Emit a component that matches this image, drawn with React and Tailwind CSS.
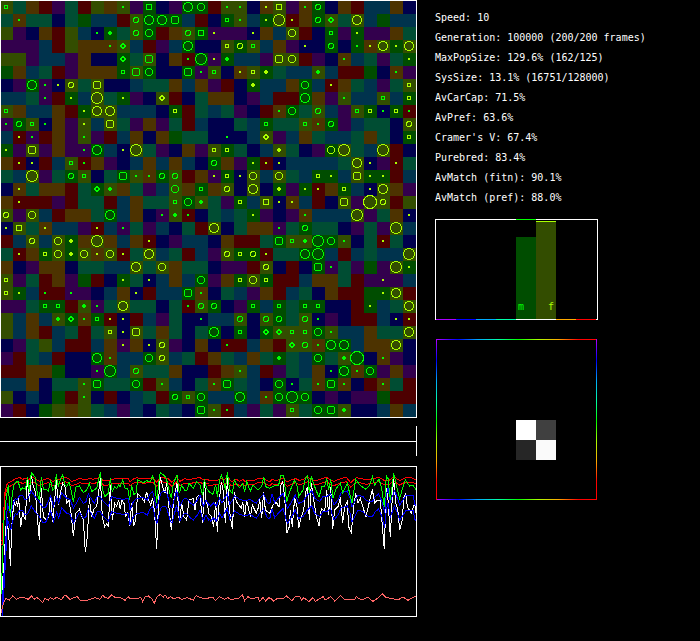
import React from 'react';

const CELL = 13;

// one letter per habitat type
const HABITAT = {
  P: '#33004d',
  N: '#00004d',
  B: '#00334d',
  T: '#004d33',
  G: '#004d00',
  L: '#334d00',
  O: '#4d3300',
  R: '#4d0000',
};

const world = [
  'LTORPTRLOLPGNPGGRLLNOLPOGNORBBON',
  'TOTTNTGBBRLGGGBRNGLBGLROGLTLBGBB',
  'LPNORLBNGTLGROLGPPPNOBLRNGPGPPOT',
  'PPPBRLOOOLBRPBGNNLGLBOPNNGNGOLGL',
  'LLPBBPONNGTLNORGPGBBPLLRPNOBTPTG',
  'GOBTRPOOOGLGNNGPLNOLGTBBLBRRGNOP',
  'NPGPNLTLNNBTTOBOPRNGBBOGBROTBPTL',
  'BBTPRGBLTGPNLRNTOONPBRRGOPLBBLBG',
  'LOBBORGLLBBBNGRTBTPNROGTLBPLGNGR',
  'PGLNOPLBLTPOPTRBNNTBGTTLOGPBTTNL',
  'BRPROPLPRBONOGTTNNNBLPBOTBBTOTNG',
  'GPLPOPPGBNLTPNOPLGTNBLTNPGLTBLRN',
  'ORNRBLROPNBOBOBNGOPGRNBBBBTLNPRT',
  'TBLPTGLNTGLOGLROPGNLBLTBGGBLGGRB',
  'NOTOORTGLOTPBLOGOLNLNGPGROGBNLOP',
  'ORRRPRTTRBOTTLGLTPGBLNOBRNLPLLRL',
  'LPLBROOTGBONPLRNTBTGPNPOBBBLPTON',
  'NLTOBBPRBPTPBNTRLNTOOPTGTTNPTPLB',
  'RBLBLGOLOBORNPBBNORRTGLLGGLNTRTN',
  'TROGLGLOLRTLBTRBPLGGRTTGGBRBTBBL',
  'ONPOONTTBBLTLOTTNPPRLNRNGPTPGPLG',
  'LPTROPGRNGTNBOBGPOGLGRRBOOTRPPPB',
  'LGBRRPPNBONRBBGONTBPORBTNORRGGLR',
  'PPTGGRLPTLTTNTRLGNPGBGTGGNNRGBTL',
  'LBOBLGOGRNRBPTNNBBLNLGTLNPNRRBNR',
  'LBORBTRTLNLTOTNTGNGNGLLLGLBBOTTL',
  'NPTLBRRBOPONLPNONRRBORLLOGGBOOLN',
  'PRTBRNNGOBBGLBTROTBOTGTBGTLGNOPN',
  'RROOGNNPGBLTTONNROLBRPTBONGOGPOP',
  'BBONTTLGTTGRLBNTOGTBNGNTOGONROTR',
  'LNBNGRLNRNBTRGLGBBGBOGGGNPNPPGRR',
  'PRNGLOLTBPBNTBNGLRBPTPLTGGLNNBOB',
];

// column + kind for each row; lowercase = male (green), uppercase = female (lime)
const marks = [
  '0c 9a 11q 14g 15f 17a 18a 20A 21Q 23a 24e',
  '1a 10e 11g 12g 13s 17c 18a 20A 21H 22A 24e 25d 27G',
  '7a 8b 10e 11f 14e 15q 16A 19A 22F 25c 27A',
  '8a 9d 14g 17C 18E 19c 23A 25e 27a 28A 29G 30A 31G',
  '9d 11s 14a 15h 16A 17b 21S 22F 26a 31A',
  '9c 10s 11f 14s 15a 16c 18A 19C 20B 24b 30a',
  '2g 3a 4A 5E 7S 19B 23f 25A 31C',
  '3a 5A 7H 9A 12D 23g 26a 29c 31C',
  '0c 6A 7G 8G 13C 21a 22f 24e 27c 28C 29a 30C 31a',
  '0a 1e 2c 3a 6A 8S 20c 23c 24a 25e 31E',
  '1A 2a 6a 17a 20D 31C',
  '0A 2S 6a 7g 9A 10H 16C 17C 21B 25F 26H 29H',
  '1A 2A 5c 6a 16e 19A 20A 21A 27G 28A 30A',
  '2H 5e 6c 9s 10a 11a 12e 13e 16A 17C 18A 19F 21F 24C 25A 27S 28A 29A',
  '1A 7d 8b 13f 15c 17E 19G 21B 23A 24A 26C 28A 29G',
  '1A 13c 14f 15b 18C 20Q 21A 22A 26S 28I 29E',
  '0E 2F 8g 12a 13b 14a 19A 23a 27H 31A',
  '0A 1Q 3A 7A 9a 16G 21a 23e 30H',
  '2E 4F 5B 7H 11A 21s 22c 23b 24h 25f 26a 29A',
  '1A 3C 4F 5B 6F 7A 8F 9A 11G 17E 18C 19E 20A 23g 24h 31H',
  '10G 12F 20E 24s 25a 30H 31A',
  '0C 9A 11A 15f 18C 19F 20C 29A',
  '0C 1A 3a 5a 10A 14s 15a 29A 30G',
  '3c 4c 6b 7a 9G 14a 15e 16e 19c 21c 23c 24c 28A 31G',
  '4b 5d 6a 7c 8A 9A 15a 18e 20e 21e 23e 24a 30A 31A',
  '8C 9A 10S 16g 18c 20d 21d 22c 23c 24f 25a 31G',
  '9A 11A 12E 17a 22d 23e 24a 25g 26g 30G',
  '7g 8a 11f 12E 21b 24f 26b 27i 29a',
  '7a 8h 10e 18a 25a 26g 27a 28f',
  '6a 7s 10f 12a 16a 17s 21f 22a 24a 25s 26a 29a',
  '6a 13e 14c 15f 18g 20a 21f 22h 23f',
  '15s 16a 17a 22c 24f 25s 26b',
];

const RADIUS = { e: 3, f: 4, g: 5, h: 6, i: 7 };

function Mark({ kind, col, row }) {
  const size = kind.toLowerCase();
  const color = kind === size ? '#00ff00' : '#aaff00';
  const x = col * CELL + 6;
  const y = row * CELL + 7;

  if (size === 'a') return <rect x={x - 1} y={y - 1} width="2" height="2" fill={color} />;
  if (size === 'b') return <path d={`M${x - 2} ${y - 1}h1v-1h2v1h1v2h-1v1h-2v-1h-1z`} fill={color} />;
  if (size === 'c') return <path d={`M${x - 2} ${y - 2}h4v4h-4zm1 1v2h2v-2z`} fill={color} fillRule="evenodd" />;
  if (size === 'q') return <path d={`M${x - 3} ${y - 3}h6v6h-6zm1 1v4h4v-4z`} fill={color} fillRule="evenodd" />;
  if (size === 'd') return <path d={`M${x - 3} ${y - 1}h1v-1h1v-1h2v1h1v1h1v2h-1v1h-1v1h-2v-1h-1v-1h-1zm2 0v2h2v-2z`} fill={color} fillRule="evenodd" />;
  if (size === 's') return <path d={`M${x - 3} ${y - 4}h6v1h1v6h-1v1h-6v-1h-1v-6h1zm0 1v6h6v-6z`} fill={color} fillRule="evenodd" />;
  return <circle cx={x} cy={y} r={RADIUS[size] - 0.5} fill="none" stroke={color} />;
}

function World() {
  return (
    <svg className="block w-[417px] h-[418px]" viewBox="0 0 417 418" shapeRendering="crispEdges">
      {world.map((line, row) =>
        line.split('').map((t, col) => (
          <rect key={`${row}-${col}`} x={col * CELL} y={row * CELL + 1} width={CELL} height={CELL} fill={HABITAT[t]} />
        ))
      )}
      {marks.map((line, row) =>
        line.split(' ').map((m) => (
          <Mark key={`${row}-${m}`} kind={m.slice(-1)} col={parseInt(m, 10)} row={row} />
        ))
      )}
      <rect x="0.5" y="0.5" width="416" height="417" fill="none" stroke="#fff" />
    </svg>
  );
}

// history traces, three units per pixel, split in two halves
const history = [
  {
    x: 0,
    red: '3,360 8,360 9,310 15,215 22,190 37,182 48,175 60,173 68,178 75,175 86,178 100,173 110,180 118,184 130,180 145,175 152,180 160,185 170,178 180,178 195,172 205,176 215,184 228,180 240,175 250,179 260,178 270,175 280,178 300,172 310,182 325,182 345,176 385,176 390,185 398,178 410,173 430,177 445,175 460,176 470,186 482,172 505,176 515,186 530,173 540,184 555,176 568,180 580,175 600,173 610,180 627,178',
    blue: '6,560 12,460 18,350 22,250 32,285 40,250 45,236 52,238 60,225 70,228 75,240 84,235 94,212 105,230 118,245 128,262 137,262 145,245 152,228 160,260 170,232 176,250 185,218 200,235 210,238 220,264 230,248 238,232 250,250 258,245 265,222 275,238 283,250 292,230 300,228 310,245 325,258 335,230 350,235 370,238 385,235 390,270 400,245 410,235 430,233 442,240 450,222 458,215 464,240 470,268 482,220 490,213 500,217 510,255 516,265 530,210 540,258 550,238 560,235 572,250 580,255 592,240 600,225 610,258 618,240 627,258',
    green: '3,525 6,460 12,300 18,240 25,195 31,290 37,220 43,190 54,183 62,210 68,204 76,208 83,170 88,215 94,157 106,172 112,220 118,240 124,172 130,208 137,208 145,213 152,180 158,210 164,205 169,163 175,200 182,175 188,165 195,195 200,200 207,187 213,210 220,245 228,200 238,198 250,218 260,210 268,190 275,215 290,205 301,157 307,205 314,230 325,220 331,175 337,215 344,200 350,206 356,195 360,200 368,180 375,205 383,205 389,240 395,195 401,223 408,220 413,180 430,188 440,182 450,186 458,168 464,185 470,248 476,190 481,157 490,165 497,172 500,180 507,210 514,235 520,190 531,165 538,220 545,195 555,213 562,210 567,190 580,205 590,185 600,195 608,225 613,178 620,205 627,213',
    white: '3,460 6,510 12,430 20,280 28,370 31,437 36,310 42,240 46,258 50,244 53,262 56,235 62,322 68,275 72,290 76,300 82,180 88,245 94,165 100,200 106,215 112,290 118,360 124,205 130,290 140,300 146,290 152,225 158,305 164,240 169,180 175,255 182,215 188,190 195,200 201,250 207,240 213,280 220,347 228,280 238,268 250,300 256,395 262,350 268,235 275,290 283,265 290,260 301,175 307,290 314,320 320,312 325,318 331,195 337,300 344,250 350,258 356,240 361,268 365,240 372,250 377,292 383,275 389,318 395,250 401,318 407,300 413,222 425,233 433,245 440,215 446,240 452,255 458,235 464,280 470,388 476,235 481,170 488,200 495,220 500,190 507,265 514,330 520,250 526,215 531,190 538,310 545,250 552,290 560,300 567,240 580,236 585,270 591,230 600,225 608,310 613,180 618,240 627,275',
    salmon: '3,578 12,545 18,536 28,540 38,528 50,538 60,532 75,534 85,538 95,527 102,538 110,532 120,540 128,548 135,535 145,541 150,533 160,538 170,532 185,540 192,527 200,528 210,538 220,534 232,530 240,541 265,540 285,533 300,538 308,526 315,532 325,535 335,525 345,532 360,532 375,541 385,530 390,536 410,536 422,532 428,545 436,530 445,528 455,536 463,550 470,532 481,523 490,532 495,524 503,536 512,530 520,536 535,532 545,538 560,533 580,540 588,527 605,534 627,535',
  },
  {
    x: 624,
    red: '0,182 15,182 30,180 40,175 46,180 60,172 70,185 85,178 95,184 105,178 110,184 125,180 140,180 152,174 165,175 185,185 192,178 205,182 225,174 238,186 250,180 262,175 275,182 290,176 300,172 315,180 330,180 345,175 355,172 368,180 378,184 400,175 415,172 428,188 445,173 460,176 475,180 500,175 512,172 530,182 545,180 557,170 575,182 590,174 610,173 626,180',
    blue: '0,248 8,258 17,248 25,258 35,235 42,248 58,220 65,252 73,242 80,228 95,238 110,243 125,238 145,250 155,235 167,222 178,248 185,252 192,222 200,248 213,232 225,220 238,265 250,248 262,225 272,250 285,245 298,225 312,212 320,235 335,245 345,230 355,230 368,222 378,256 390,240 400,218 418,213 426,235 432,262 450,225 465,230 475,242 493,245 502,230 512,222 522,245 530,278 535,225 540,205 547,245 560,212 575,255 585,240 595,225 615,225 622,258',
    green: '0,213 15,223 23,195 28,230 34,185 40,165 46,180 52,210 58,157 65,210 73,220 79,180 88,195 95,203 104,190 110,215 116,185 127,213 135,195 150,210 161,200 167,170 173,200 185,205 200,197 212,195 219,165 227,165 236,245 247,210 260,180 268,200 272,230 285,210 293,172 299,167 304,220 310,167 318,195 333,232 342,198 350,200 356,175 362,210 368,178 375,235 385,205 397,190 404,218 418,190 425,220 432,248 443,178 455,195 474,208 485,195 493,170 500,195 513,178 520,200 529,262 535,168 540,175 547,240 557,160 565,195 575,235 585,200 592,180 605,198 615,195 624,210',
    white: '0,278 10,290 17,320 23,245 28,335 34,240 40,185 46,215 52,310 58,175 64,270 73,328 79,215 85,245 100,265 104,245 110,290 116,240 127,290 133,255 145,280 152,260 155,235 161,295 167,215 172,270 185,280 195,255 205,247 213,262 219,195 224,185 230,230 236,340 244,320 247,270 253,320 260,232 267,260 272,325 280,290 287,270 293,215 299,200 304,300 310,190 317,240 325,290 333,317 340,265 350,275 356,210 362,285 368,200 374,328 380,270 390,260 397,232 404,310 410,260 418,245 422,320 430,338 437,260 443,220 450,250 457,235 465,262 474,290 482,255 493,208 500,250 508,240 517,240 523,320 529,388 535,205 540,240 547,350 553,230 557,175 563,250 569,265 575,330 583,300 587,235 593,220 598,260 610,280 620,250 624,280',
    salmon: '0,532 15,533 22,541 35,530 50,538 60,533 68,538 90,536 103,524 110,542 120,530 130,536 150,532 155,544 165,532 173,543 182,533 190,536 197,543 210,534 225,537 235,528 252,542 262,530 275,530 280,540 287,533 303,545 315,533 322,544 345,530 352,540 368,530 380,543 398,526 410,540 440,538 445,530 460,540 480,532 495,544 510,534 523,522 535,533 555,536 570,540 585,531 600,541 615,532 624,530',
  },
];

function Trace({ points, color, dy = 0 }) {
  return (
    <polyline
      points={points}
      transform={`translate(0 ${dy})`}
      fill="none"
      stroke={color}
      strokeWidth="3"
    />
  );
}

function History() {
  return (
    <svg className="block w-[417px] h-[151px] mt-2.5" viewBox="0 138 1251 453" shapeRendering="crispEdges">
      {history.map((h) => (
        <g key={h.x} transform={`translate(${h.x} 0)`}>
          <Trace points={h.red} color="#ff0000" />
          <Trace points={h.red} color="#ff0000" dy={13} />
          <Trace points={h.white} color="#fff" />
          <Trace points={h.blue} color="#0000ff" />
          <Trace points={h.blue} color="#0000ff" dy={45} />
          <Trace points={h.green} color="#00ff00" />
          <Trace points={h.salmon} color="#ff6666" />
        </g>
      ))}
      <rect x="1.5" y="139.5" width="1248" height="450" fill="none" stroke="#fff" strokeWidth="3" />
    </svg>
  );
}

const stats = [
  'Speed: 10',
  'Generation: 100000 (200/200 frames)',
  'MaxPopSize: 129.6% (162/125)',
  'SysSize: 13.1% (16751/128000)',
  'AvCarCap: 71.5%',
  'AvPref: 63.6%',
  "Cramer's V: 67.4%",
  'Purebred: 83.4%',
  'AvMatch (fitn): 90.1%',
  'AvMatch (pref): 88.0%',
];

const HUES = ['#aa00ff', '#0000ff', '#00aaff', '#00ffaa', '#00ff00', '#aaff00', '#ffaa00', '#ff0000'];

function SexBars() {
  return (
    <svg className="block w-[163px] h-[101px] mt-[11px]" viewBox="0 0 163 101" shapeRendering="crispEdges">
      <rect x="0.5" y="0.5" width="162" height="100" fill="none" stroke="#fff" />
      <rect x="81" y="18" width="20" height="82" fill="#004d00" />
      <rect x="101" y="2" width="20" height="98" fill="#334d00" />
      <rect x="81" y="0" width="20" height="1" fill="#00ff00" />
      <rect x="101" y="2" width="20" height="1" fill="#aaff00" />
      {HUES.map((hue, i) =>
        i === 4 || i === 5 ? null : <rect key={hue} x={1 + i * 20} y="100" width="20" height="1" fill={hue} />
      )}
      <text x="83" y="91" fontSize="10" fill="#00ff00">m</text>
      <text x="113" y="91" fontSize="10" fill="#aaff00">f</text>
    </svg>
  );
}

function PreferenceMatrix() {
  const stops = HUES.map((hue, i) => <stop key={hue} offset={i / 8 + 0.01} stopColor={hue} />);
  return (
    <svg className="block w-[163px] h-[161px] mt-[19px]" viewBox="0 0 163 161" shapeRendering="crispEdges">
      <defs>
        <linearGradient id="across" x1="0" y1="0" x2="1" y2="0">{stops}</linearGradient>
        <linearGradient id="down" x1="0" y1="0" x2="0" y2="1">{stops}</linearGradient>
      </defs>
      <rect x="1" y="0" width="161" height="1" fill="url(#across)" />
      <rect x="1" y="160" width="161" height="1" fill="url(#across)" />
      <rect x="1" y="0" width="1" height="161" fill="url(#down)" />
      <rect x="161" y="0" width="1" height="161" fill="url(#down)" />
      <rect x="81" y="81" width="20" height="20" fill="#ffffff" />
      <rect x="101" y="81" width="20" height="20" fill="#404040" />
      <rect x="81" y="101" width="20" height="20" fill="#262626" />
      <rect x="101" y="101" width="20" height="20" fill="#fafafa" />
    </svg>
  );
}

export default function App() {
  return (
    <main className="min-h-screen bg-black text-white font-['DejaVu_Sans_Mono','Liberation_Mono',monospace] flex items-start">
      {/* simulation */}
      <section className="shrink-0">
        <World />
        <svg className="block w-[417px] h-[30px] mt-2" viewBox="0 0 417 30" shapeRendering="crispEdges">
          <path d="M0 15.5H417M416.5 0V30" fill="none" stroke="#fff" />
        </svg>
        <History />
      </section>

      {/* statistics */}
      <section className="grow pl-[18px] pt-2">
        <ul className="text-[10px] leading-5 whitespace-nowrap">
          {stats.map((line) => (
            <li key={line}>{line}</li>
          ))}
        </ul>
        <SexBars />
        <PreferenceMatrix />
      </section>
    </main>
  );
}
